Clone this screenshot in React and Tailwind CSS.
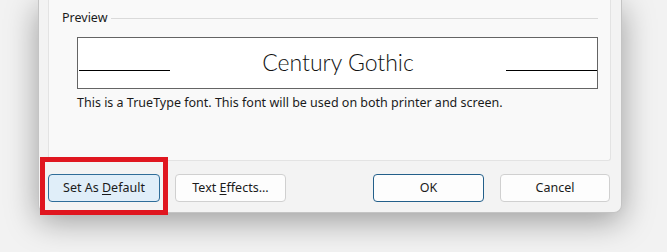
import React from "react";

function Btn({ children, className = "" }) {
  return (
    <div
      className={
        "h-[28px] rounded-[4px] border flex items-center justify-center text-[12.5px] text-[#1b1b1b] " +
        className
      }
    >
      <span className="whitespace-pre">{children}</span>
    </div>
  );
}

export default function App() {
  return (
    <div
      className="relative w-[667px] h-[252px] overflow-hidden bg-[#f2f2f2]"
      style={{ fontFamily: '"Noto Sans", "Open Sans", sans-serif' }}
    >
      <div className="ml-[38px] w-[584px] h-[213px] bg-[#f3f3f3] border-x border-b border-[#c4c4c4] rounded-b-[8px] shadow-[0_8px_32px_rgba(0,0,0,0.36)] flex flex-col">
        <div className="ml-[9px] w-[563px] h-[161px] bg-[#f9f9f9] border-x border-b border-[#e3e3e3] rounded-b-[3px] flex flex-col">
          <div className="mt-[10px] pl-[13px] pr-[12px] flex items-center h-[16px]">
            <span className="text-[12.5px] leading-[16px] text-[#1b1b1b]">Preview</span>
            <div className="flex-1 h-px bg-[#dadada] ml-[4px]" />
          </div>
          <div className="mt-[11px] ml-[28px] w-[521px] h-[52px] border border-[#646464] bg-white flex">
            <div className="ml-px w-[91px] h-px bg-black mt-[32px]" />
            <div
              className="flex-1 text-center text-[23px] leading-[23px] pt-[13px] text-[#111]"
              style={{ fontFamily: 'Lato, "Noto Sans", sans-serif', fontWeight: 300 }}
            >
              Century Gothic
            </div>
            <div className="w-[91px] h-px bg-black mt-[32px]" />
          </div>
          <div className="mt-[6px] ml-[28px] text-[12.5px] leading-[16px] text-[#1b1b1b]">
            This is a TrueType font. This font will be used on both printer and screen.
          </div>
        </div>
        <div className="mt-[13px] pl-[9px] flex">
          <Btn className="w-[112px] bg-[#e0eef9] border-[#2f6d99]">
            Set As <u className="underline-offset-2">D</u>efault
          </Btn>
          <Btn className="ml-[15px] w-[111px] bg-[#fdfdfd] border-[#d0d0d0]">
            Text <u className="underline-offset-2">E</u>ffects...
          </Btn>
          <Btn className="ml-[87px] w-[111px] bg-[#fdfdfd] border-[#235f8a]">OK</Btn>
          <Btn className="ml-[16px] w-[110px] bg-[#fdfdfd] border-[#d0d0d0]">Cancel</Btn>
        </div>
      </div>
      <div className="absolute left-[40px] top-[157px] w-[128px] h-[58px] border-[5px] border-[#e0161f]" />
    </div>
  );
}
